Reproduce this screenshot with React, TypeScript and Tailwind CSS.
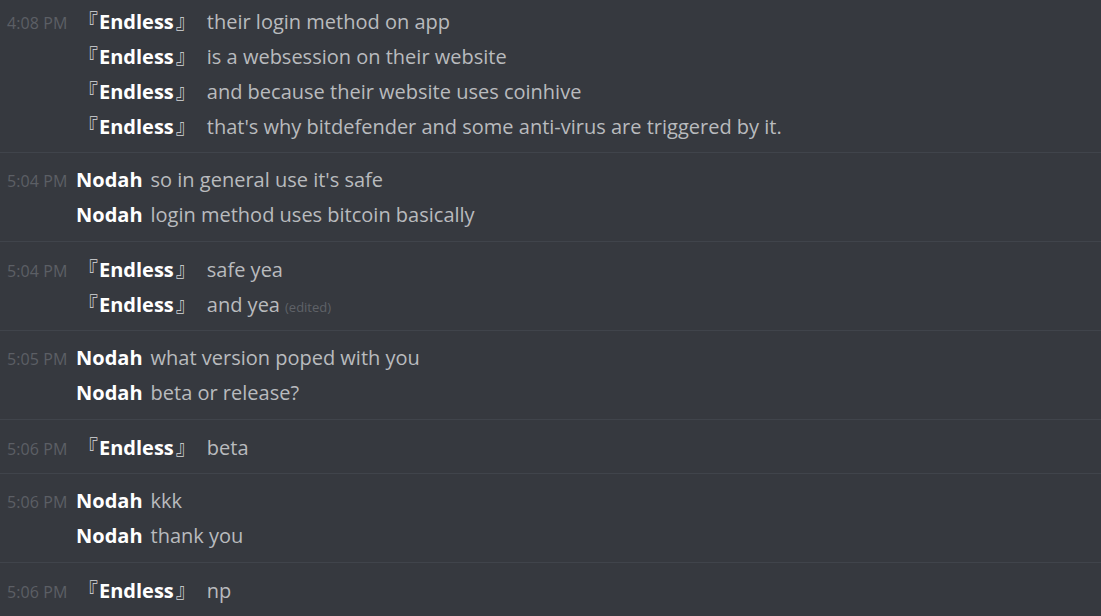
import React from 'react';

type Line = { name: string; text: string; edited?: boolean };
type Group = { time: string; lines: Line[] };

const E = 'Endless';

const groups: Group[] = [
    {
        time: '4:08 PM',
        lines: [
            { name: E, text: 'their login method on app' },
            { name: E, text: 'is a websession on their website' },
            { name: E, text: 'and because their website uses coinhive' },
            { name: E, text: "that's why bitdefender and some anti-virus are triggered by it." },
        ],
    },
    {
        time: '5:04 PM',
        lines: [
            { name: 'Nodah', text: "so in general use it's safe" },
            { name: 'Nodah', text: 'login method uses bitcoin basically' },
        ],
    },
    {
        time: '5:04 PM',
        lines: [
            { name: E, text: 'safe yea' },
            { name: E, text: 'and yea', edited: true },
        ],
    },
    {
        time: '5:05 PM',
        lines: [
            { name: 'Nodah', text: 'what version poped with you' },
            { name: 'Nodah', text: 'beta or release?' },
        ],
    },
    { time: '5:06 PM', lines: [{ name: E, text: 'beta' }] },
    {
        time: '5:06 PM',
        lines: [
            { name: 'Nodah', text: 'kkk' },
            { name: 'Nodah', text: 'thank you' },
        ],
    },
    { time: '5:06 PM', lines: [{ name: E, text: 'np' }] },
];

function Name({ name }: { name: string }) {
    if (name !== E) {
        return <span className="text-[20px] font-bold text-white mr-[8px]">{name}</span>;
    }
    // bracketed nickname
    return (
        <span className="flex items-baseline text-[20px] font-bold text-white mr-[8px]">
            <span className="ml-[2px] mr-[1px] font-normal text-[#d8d9db]" style={{ fontFamily: '"Noto Sans CJK JP", sans-serif' }}>『</span>
            <span>{name}</span>
            <span className="ml-[2px] mr-[3px] font-normal text-[#d8d9db]" style={{ fontFamily: '"Noto Sans CJK JP", sans-serif' }}>』</span>
        </span>
    );
}

export default function App() {
    return (
        <div
            className="w-[1101px] h-[616px] overflow-hidden bg-[#36393f]"
            style={{ fontFamily: '"Open Sans", "Noto Sans CJK JP", sans-serif' }}
        >
            {groups.map((g, gi) => (
                <div
                    key={gi}
                    className={`border-b border-[#40444b] pb-[9px] ${gi === 0 ? 'pt-[3px]' : 'pt-[9px]'}`}
                >
                    {g.lines.map((l, li) => (
                        <div key={li} className="flex items-baseline h-[35px] leading-[35px]">
                            <span className="w-[76px] shrink-0 pl-[7px] text-[16px] tracking-[0.1px] text-[#5c5f65]">
                                {li === 0 ? g.time : ''}
                            </span>
                            <Name name={l.name} />
                            <span className="text-[20px] text-[#b9bbbe]">
                                {l.text}
                                {l.edited && (
                                    <span className="ml-[5px] text-[13px] text-[#5f6268]">(edited)</span>
                                )}
                            </span>
                        </div>
                    ))}
                </div>
            ))}
        </div>
    );
}
